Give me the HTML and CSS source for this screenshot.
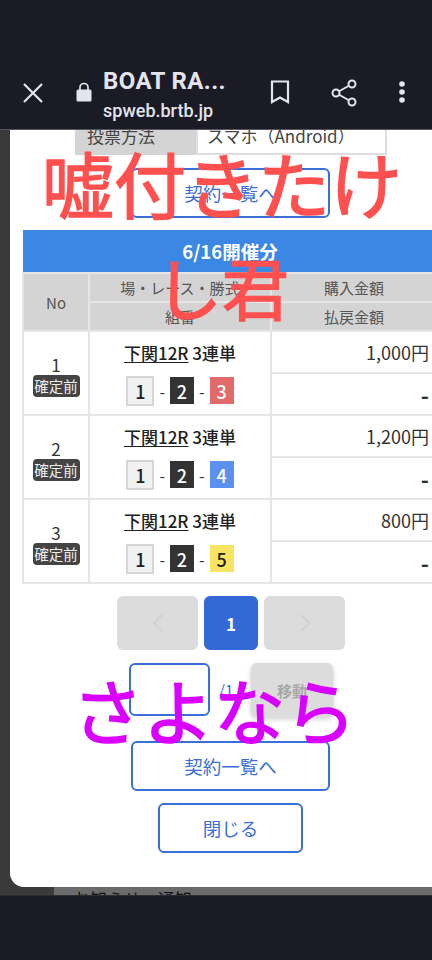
FILE: index.html
```html
<!DOCTYPE html>
<html lang="ja">
<head>
    <meta charset="UTF-8">
    <meta name="viewport" content="width=device-width, initial-scale=1.0">
    <title>BOAT RACE</title>
    <link rel="stylesheet" href="styles.css">
</head>
<body>

    <!-- Browser toolbar -->
    <header class="toolbar">
        <svg class="icon-close" width="22" height="22" viewBox="0 0 22 22"><path d="M2 2L20 20M20 2L2 20" fill="none" stroke="#e4e4ee" stroke-width="2.2"/></svg>
        <svg class="icon-lock" width="16" height="20" viewBox="0 0 16 20"><path d="M4 8V5.500a4 4 0 0 1 8 0V8" fill="none" stroke="#e4e4ee" stroke-width="1.700"/><rect x="0.500" y="7.500" width="15" height="12" rx="1.500" fill="#e4e4ee"/></svg>
        <div class="page-info">
            <div class="page-title">BOAT RA...</div>
            <div class="page-url">spweb.brtb.jp</div>
        </div>
        <svg class="icon-bookmark" width="20" height="24" viewBox="0 0 20 24"><path d="M2 1.500H18V22L10 17.500L2 22Z" fill="none" stroke="#e4e4ee" stroke-width="2.200"/></svg>
        <svg class="icon-share" width="26" height="28" viewBox="0 0 26 28"><path d="M5 14L21 5M5 14L21 23" stroke="#e4e4ee" stroke-width="2"/><circle cx="5" cy="14" r="3.500" fill="#1a1b25" stroke="#e4e4ee" stroke-width="2"/><circle cx="21" cy="5" r="3.500" fill="#1a1b25" stroke="#e4e4ee" stroke-width="2"/><circle cx="21" cy="23" r="3.500" fill="#1a1b25" stroke="#e4e4ee" stroke-width="2"/></svg>
        <svg class="icon-more" width="6" height="22" viewBox="0 0 6 22"><circle cx="3" cy="3" r="2.800" fill="#e4e4ee"/><circle cx="3" cy="11" r="2.800" fill="#e4e4ee"/><circle cx="3" cy="19" r="2.800" fill="#e4e4ee"/></svg>
    </header>

    <main class="web-area">
        <div class="modal">
            <div class="method-row">
                <div class="method-label"><span>投票方法</span></div>
                <div class="method-value"><span>スマホ（Android）</span></div>
            </div>

            <a class="btn btn-wide btn-top">契約一覧へ</a>

            <table class="vote-table">
                <colgroup>
                    <col class="col-no">
                    <col class="col-race">
                    <col class="col-money">
                </colgroup>
                <tr>
                    <th class="date-head" colspan="3">6/16開催分</th>
                </tr>
                <tr class="head-row">
                    <th rowspan="2">No</th>
                    <th>場・レース・勝式</th>
                    <th>購入金額</th>
                </tr>
                <tr class="head-row">
                    <th>組番</th>
                    <th>払戻金額</th>
                </tr>

                <tr class="row-top">
                    <td class="cell-no" rowspan="2">1<span class="status">確定前</span></td>
                    <td class="cell-race" rowspan="2">
                        <div class="race-name"><u>下関12R</u> 3連単</div>
                        <div class="boats">
                            <span class="boat boat-1">1</span>-<span class="boat boat-2">2</span>-<span class="boat boat-3">3</span>
                        </div>
                    </td>
                    <td class="cell-money">1,000円</td>
                </tr>
                <tr class="row-bottom"><td class="cell-money cell-dash">-</td></tr>

                <tr class="row-top">
                    <td class="cell-no" rowspan="2">2<span class="status">確定前</span></td>
                    <td class="cell-race" rowspan="2">
                        <div class="race-name"><u>下関12R</u> 3連単</div>
                        <div class="boats">
                            <span class="boat boat-1">1</span>-<span class="boat boat-2">2</span>-<span class="boat boat-4">4</span>
                        </div>
                    </td>
                    <td class="cell-money">1,200円</td>
                </tr>
                <tr class="row-bottom"><td class="cell-money cell-dash">-</td></tr>

                <tr class="row-top">
                    <td class="cell-no" rowspan="2">3<span class="status">確定前</span></td>
                    <td class="cell-race" rowspan="2">
                        <div class="race-name"><u>下関12R</u> 3連単</div>
                        <div class="boats">
                            <span class="boat boat-1">1</span>-<span class="boat boat-2">2</span>-<span class="boat boat-5">5</span>
                        </div>
                    </td>
                    <td class="cell-money">800円</td>
                </tr>
                <tr class="row-bottom"><td class="cell-money cell-dash">-</td></tr>
            </table>

            <div class="pager">
                <div class="page-btn page-arrow">
                    <svg width="12" height="20" viewBox="0 0 12 20"><path d="M10 2L2 10L10 18" fill="none" stroke="#cfcfcf" stroke-width="1.500"/></svg>
                </div>
                <div class="page-btn page-current">1</div>
                <div class="page-btn page-arrow">
                    <svg width="12" height="20" viewBox="0 0 12 20"><path d="M2 2L10 10L2 18" fill="none" stroke="#cfcfcf" stroke-width="1.500"/></svg>
                </div>
            </div>

            <div class="jump">
                <div class="jump-input"></div>
                <span class="jump-total">/1</span>
                <div class="jump-btn">移動</div>
            </div>

            <a class="btn btn-wide btn-list">契約一覧へ</a>
            <a class="btn btn-close">閉じる</a>
        </div>
        <div class="behind"><span>お知らせ・通知</span></div>

        <!-- Text stamped on top of the screenshot -->
        <div class="stamp stamp-red">嘘付きたけ<br><span class="stamp-small">し君</span></div>
        <div class="stamp stamp-pink">さよなら</div>
    </main>

    <footer class="navbar"></footer>

</body>
</html>
```

FILE: styles.css
```css
/* General Styles */
* {
    box-sizing: border-box;
}

body {
    margin: 0;
    width: 432px;
    height: 960px;
    overflow: hidden;
    display: flex;
    flex-direction: column;
    font-family: "Noto Sans CJK JP", "Noto Sans", sans-serif;
    background: #1a1b25;
}

/* Browser toolbar */
.toolbar {
    height: 130px;
    flex: none;
    position: relative;
    display: flex;
    align-items: flex-start;
    padding-top: 70px;
    background: #1a1b25;
    border-bottom: 1px solid #55565e;
}

.icon-close {
    margin: 12px 0 0 22px;
}

.icon-lock {
    margin: 12px 0 0 32px;
}

.page-info {
    margin-left: 11px;
    width: 148px;
    font-family: Roboto, sans-serif;
    color: #e4e4ee;
}

.page-title {
    font-size: 24px;
    font-weight: 700;
    line-height: 22px;
    letter-spacing: 0.4px;
}

.page-url {
    margin-top: 8px;
    font-size: 18px;
    font-weight: 500;
    line-height: 21px;
}

.icon-bookmark {
    margin: 10px 0 0 19px;
}

.icon-share {
    margin: 9px 0 0 41px;
}

.icon-more {
    margin: 11px 0 0 42px;
}

/* Page behind the modal */
.web-area {
    height: 765px;
    flex: none;
    position: relative;
    overflow: hidden;
    background: #3a3a3a;
}

.modal {
    height: 757px;
    margin-left: 10px;
    overflow: hidden;
    background: white;
    border-radius: 0 0 0 14px;
}

.behind {
    height: 8px;
    margin-left: 54px;
    padding-left: 19px;
    overflow: hidden;
    background: #6b6b6b;
    color: #111;
    font-size: 17px;
    line-height: 24px;
}

/* Clipped row at the top of the modal */
.method-row {
    width: 312px;
    height: 25px;
    margin-left: 65px;
    display: flex;
    overflow: hidden;
    font-size: 17px;
    color: #444;
}

.method-label {
    width: 121px;
    display: flex;
    align-items: flex-end;
    padding: 0 0 8px 12px;
    background: #d4d4d4;
}

.method-value {
    flex: 1;
    display: flex;
    align-items: flex-end;
    padding: 0 0 6px 9px;
    border: 2px solid #dedede;
    border-top: none;
    white-space: nowrap;
}

.method-value span,
.method-label span {
    line-height: 22px;
}

/* Buttons */
.btn {
    display: flex;
    align-items: center;
    justify-content: center;
    height: 50px;
    border: 2px solid #3a6fd8;
    border-radius: 6px;
    background: white;
    color: #3a6fd8;
    font-size: 18.500px;
}

.btn-wide {
    width: 199px;
    margin-left: 121px;
}

.btn-top {
    margin-top: 13px;
}

.btn-list {
    margin-top: 24px;
}

.btn-close {
    width: 145px;
    margin: 12px 0 0 148px;
}

/* Table */
.vote-table {
    width: 416px;
    margin: 12px 0 0 12px;
    border-collapse: collapse;
    table-layout: fixed;
    color: #333;
}

.col-no {
    width: 66px;
}

.col-race {
    width: 182px;
}

.vote-table th,
.vote-table td {
    padding: 0;
    border: 2px solid #e6e6e6;
    text-align: center;
}

.vote-table .date-head {
    height: 43px;
    border: none;
    background: #3b87e4;
    color: white;
    font-size: 18.500px;
    font-weight: 700;
}

.head-row th {
    height: 29px;
    background: #d4d4d4;
    color: #555;
    font-size: 15px;
    font-weight: 400;
}

.row-top td,
.row-bottom td {
    height: 42px;
}

.vote-table .cell-no {
    padding-top: 6px;
    font-size: 17px;
    line-height: 20px;
}

.status {
    display: block;
    width: 47px;
    margin: 0 auto;
    border-radius: 4px;
    background: #444;
    color: #eee;
    font-size: 14.500px;
    line-height: 22px;
}

.race-name {
    font-size: 17px;
    font-weight: 500;
    line-height: 24px;
    color: #222;
}

.race-name u {
    text-underline-offset: 2px;
}

.boats {
    margin-top: 11px;
    display: flex;
    align-items: center;
    justify-content: center;
    gap: 5px;
    font-size: 16px;
    line-height: 28px;
}

.boat {
    width: 24px;
    height: 27px;
    display: flex;
    align-items: center;
    justify-content: center;
    font-size: 18px;
    font-weight: 500;
}

.boat-1 {
    width: 28px;
    height: 30px;
    background: #f1f1f1;
    border: 2px solid #d6d6d6;
    color: #222;
}

.boat-2 {
    background: #333;
    color: white;
}

.boat-3 {
    background: #e16b6b;
    color: white;
}

.boat-4 {
    background: #5b90ee;
    color: white;
}

.boat-5 {
    background: #f7e463;
    color: #222;
}

.vote-table .cell-money {
    padding-right: 7px;
    text-align: right;
    font-size: 18px;
    color: #333;
    white-space: nowrap;
}

.vote-table .cell-dash {
    font-size: 22px;
    font-weight: 700;
}

/* Pagination */
.pager {
    margin: 12px 0 0 107px;
    display: flex;
    gap: 6px;
}

.page-btn {
    height: 54px;
    display: flex;
    align-items: center;
    justify-content: center;
    border-radius: 6px;
}

.page-arrow {
    width: 81px;
    background: #dcdcdc;
}

.page-current {
    width: 54px;
    background: #3369d6;
    color: white;
    font-size: 17px;
    font-weight: 700;
}

.jump {
    margin: 13px 0 0 119px;
    display: flex;
    align-items: flex-start;
}

.jump-input {
    width: 81px;
    height: 53px;
    border: 2px solid #3a6fd8;
    border-radius: 6px;
}

.jump-total {
    margin: 16px 0 0 9px;
    width: 32px;
    color: #3a6fd8;
    font-size: 15px;
    line-height: 22px;
}

.jump-btn {
    width: 82px;
    height: 54px;
    display: flex;
    align-items: center;
    justify-content: center;
    border-radius: 6px;
    background: #dcdcdc;
    color: #a8a8a8;
    font-size: 15px;
    font-weight: 700;
    box-shadow: 0 2px 5px rgba(0, 0, 0, 0.2);
}

/* Stamped text */
.stamp {
    position: absolute;
    text-align: center;
    font-weight: 400;
    white-space: nowrap;
    -webkit-text-stroke: 1.500px currentColor;
}

.stamp-red {
    left: 0;
    width: 444px;
    top: 1px;
    color: #ff5050;
    font-size: 72px;
    line-height: 102px;
}

.stamp-small {
    font-size: 67px;
}

.stamp-pink {
    left: 72px;
    top: 528px;
    color: #d900ff;
    font-size: 71px;
    line-height: 100px;
}

.navbar {
    flex: 1;
    border-top: 1px solid #2c2d35;
    background: #1a1b25;
}
```
